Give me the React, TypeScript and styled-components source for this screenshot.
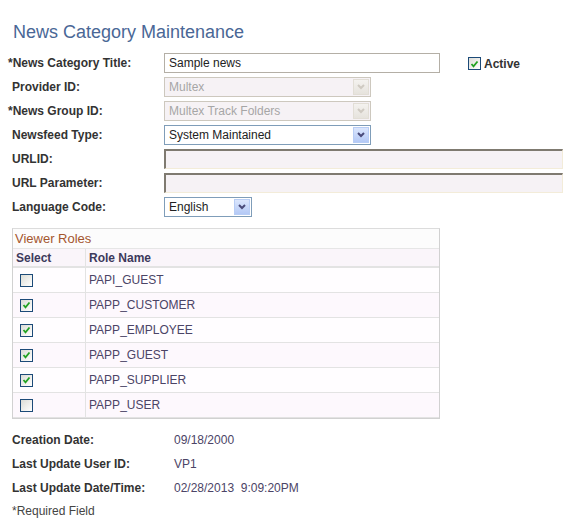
import React from 'react';
import styled, { createGlobalStyle } from 'styled-components';

const GlobalStyle = createGlobalStyle`
  body {
    margin: 0;
    background: #fff;
    font-family: "Liberation Sans", Arial, sans-serif;
    font-size: 12px;
  }
`;

const Page = styled.div`
  width: 574px;
  height: 525px;
  padding: 0 0 0 12px;
  box-sizing: border-box;
  overflow: hidden;
`;

const Title = styled.h1`
  margin: 0;
  padding: 21px 0 0 1px;
  height: 51px;
  box-sizing: border-box;
  font-size: 18px;
  line-height: 22px;
  font-weight: normal;
  color: #4a6796;
`;

const Form = styled.div`
  display: grid;
  grid-template-columns: 152px 1fr;
  grid-auto-rows: 24px;
  align-items: center;
`;

const Label = styled.div`
  font-weight: bold;
  color: #333;
  white-space: nowrap;
`;

const Req = styled.span`
  margin-left: -4px;
`;

const FieldCell = styled.div`
  display: flex;
  align-items: center;
`;

const TextInput = styled.div<{ $w: number }>`
  width: ${p => p.$w}px;
  height: 20px;
  box-sizing: border-box;
  border: 1px solid #b4afa6;
  background: #fff;
  padding: 0 4px;
  line-height: 18px;
  color: #222;
`;

const InsetInput = styled.div`
  width: 399px;
  height: 20px;
  box-sizing: border-box;
  border-top: 2px solid #7f7a70;
  border-left: 2px solid #7f7a70;
  border-right: 1px solid #f3ecd9;
  border-bottom: 1px solid #f3ecd9;
  background: #f6f2f5;
`;

const SelectBox = styled.div<{ $w: number; $disabled?: boolean }>`
  width: ${p => p.$w}px;
  height: 20px;
  box-sizing: border-box;
  border: 1px solid ${p => (p.$disabled ? '#cdc8be' : '#7f9db9')};
  background: ${p => (p.$disabled ? '#f6f2f5' : '#fff')};
  color: ${p => (p.$disabled ? '#a6a6a6' : '#222')};
  display: flex;
  align-items: center;
  justify-content: space-between;
  padding: 0 1px 0 4px;
  line-height: 18px;
`;

const Arrow = styled.div<{ $disabled?: boolean }>`
  width: 16px;
  height: 16px;
  box-sizing: border-box;
  border: 1px solid ${p => (p.$disabled ? '#e2ded6' : '#b8cdf5')};
  background: ${p =>
    p.$disabled
      ? 'linear-gradient(#f4f2ef, #e6e3dd)'
      : 'linear-gradient(#dbe6fd, #b4c9f6)'};
  display: flex;
  align-items: center;
  justify-content: center;
`;

const Check = styled.div`
  width: 13px;
  height: 13px;
  box-sizing: border-box;
  border: 1px solid #1c4a78;
  background: linear-gradient(135deg, #dcdcd6, #ffffff);
  display: flex;
  align-items: center;
  justify-content: center;
  flex: none;
`;

const ActiveWrap = styled.div`
  display: flex;
  align-items: center;
  gap: 3px;
  margin-left: 28px;
  font-weight: bold;
  color: #333;
  font-size: 12px;
  padding-top: 1px;
`;

const Grid = styled.div`
  margin-top: 9px;
  width: 428px;
  border: 1px solid #d1d1d1;
  border-top-color: #dcdcdc;
  box-sizing: border-box;
`;

const GridTitle = styled.div`
  height: 19px;
  line-height: 19px;
  padding-left: 2px;
  color: #a4562e;
  font-size: 13px;
  background: #fcfcfc;
  border-bottom: 1px solid #e6e6e6;
`;

const GridRow = styled.div<{ $bg: string; $h: number }>`
  display: grid;
  grid-template-columns: 73px 1fr;
  height: ${p => p.$h}px;
  background: ${p => p.$bg};
  border-bottom: 1px solid #e3e3e3;
  box-sizing: border-box;
`;

const Cell = styled.div<{ $head?: boolean }>`
  display: flex;
  align-items: center;
  padding-left: 3px;
  border-right: 1px solid #e3e3e3;
  font-weight: ${p => (p.$head ? 'bold' : 'normal')};
  color: ${p => (p.$head ? '#3d3a5c' : '#4b4466')};
  &:last-child {
    border-right: none;
  }
`;

const CheckCell = styled(Cell)`
  padding-left: 7px;
`;

const Info = styled.div`
  margin-top: 9px;
  display: grid;
  grid-template-columns: 162px 1fr;
  grid-auto-rows: 24px;
  align-items: center;
`;

const Value = styled.div`
  color: #4b4466;
  white-space: pre;
`;

const Required = styled.div`
  color: #444;
  height: 24px;
  line-height: 24px;
  margin-top: -1px;
`;

const Chevron = ({ color }: { color: string }) => (
  <svg width="8" height="6" viewBox="0 0 8 6">
    <path d="M1 1 L4 4 L7 1" stroke={color} strokeWidth="2" fill="none" />
  </svg>
);

const Tick = () => (
  <svg width="9" height="8" viewBox="0 0 9 8">
    <path d="M1.5 4 L3.5 6.3 L7.5 1.5" stroke="#21a121" strokeWidth="1.8" fill="none" />
  </svg>
);

const Checkbox = ({ checked }: { checked: boolean }) => (
  <Check>{checked && <Tick />}</Check>
);

const Select = ({ value, w, disabled }: { value: string; w: number; disabled?: boolean }) => (
  <SelectBox $w={w} $disabled={disabled}>
    <span>{value}</span>
    <Arrow $disabled={disabled}>
      <Chevron color={disabled ? '#cfcac2' : '#4a4b7a'} />
    </Arrow>
  </SelectBox>
);

const roles: [string, boolean][] = [
  ['PAPI_GUEST', false],
  ['PAPP_CUSTOMER', true],
  ['PAPP_EMPLOYEE', true],
  ['PAPP_GUEST', true],
  ['PAPP_SUPPLIER', true],
  ['PAPP_USER', false],
];

export default function App() {
  return (
    <Page>
      <GlobalStyle />
      <Title>News Category Maintenance</Title>
      <Form>
        <Label><Req>*</Req>News Category Title:</Label>
        <FieldCell>
          <TextInput $w={276}>Sample news</TextInput>
          <ActiveWrap>
            <Checkbox checked />
            Active
          </ActiveWrap>
        </FieldCell>
        <Label>Provider ID:</Label>
        <FieldCell><Select value="Multex" w={207} disabled /></FieldCell>
        <Label><Req>*</Req>News Group ID:</Label>
        <FieldCell><Select value="Multex Track Folders" w={207} disabled /></FieldCell>
        <Label>Newsfeed Type:</Label>
        <FieldCell><Select value="System Maintained" w={207} /></FieldCell>
        <Label>URLID:</Label>
        <FieldCell><InsetInput /></FieldCell>
        <Label>URL Parameter:</Label>
        <FieldCell><InsetInput /></FieldCell>
        <Label>Language Code:</Label>
        <FieldCell><Select value="English" w={88} /></FieldCell>
      </Form>
      <Grid>
        <GridTitle>Viewer Roles</GridTitle>
        <GridRow $bg="#faf5fa" $h={19} style={{ borderBottomWidth: 2 }}>
          <Cell $head>Select</Cell>
          <Cell $head>Role Name</Cell>
        </GridRow>
        {roles.map(([name, checked], i) => (
          <GridRow key={name} $bg={i % 2 === 0 ? '#fffdff' : '#fdf8fd'} $h={25}>
            <CheckCell><Checkbox checked={checked} /></CheckCell>
            <Cell>{name}</Cell>
          </GridRow>
        ))}
      </Grid>
      <Info>
        <Label>Creation Date:</Label>
        <Value>09/18/2000</Value>
        <Label>Last Update User ID:</Label>
        <Value>VP1</Value>
        <Label>Last Update Date/Time:</Label>
        <Value>02/28/2013  9:09:20PM</Value>
      </Info>
      <Required>*Required Field</Required>
    </Page>
  );
}
